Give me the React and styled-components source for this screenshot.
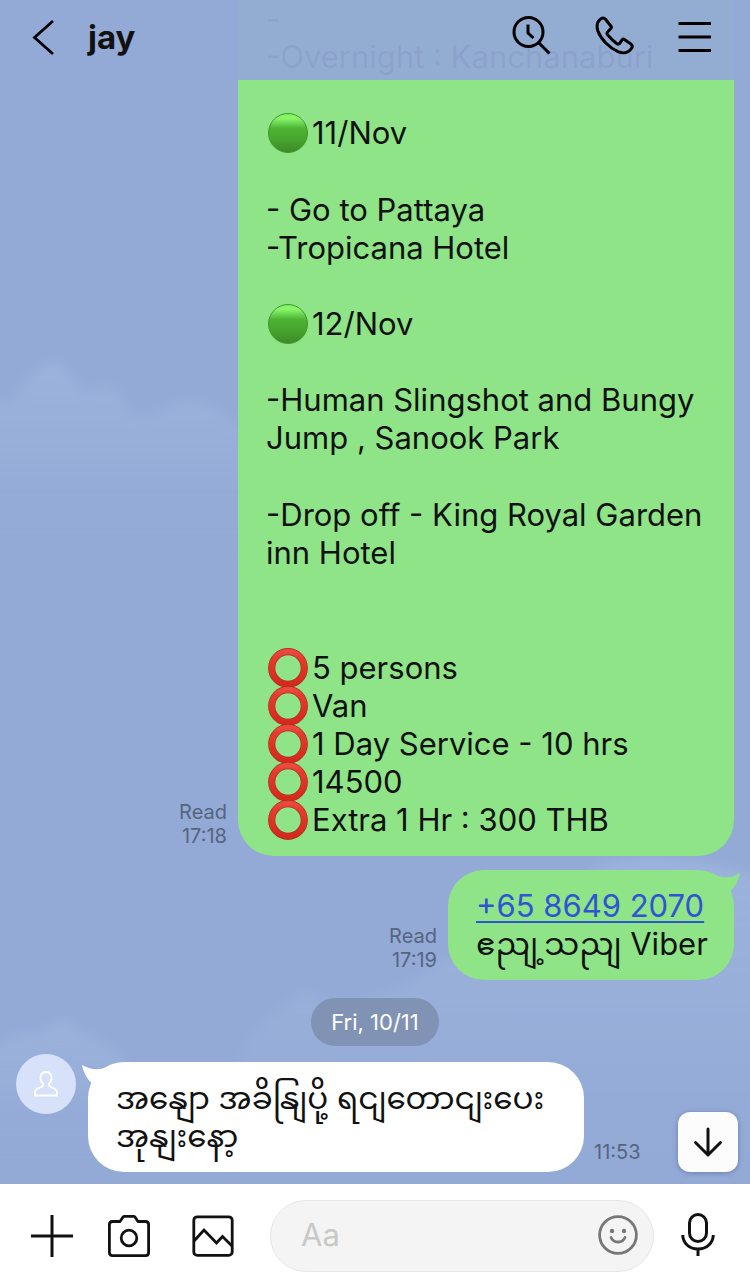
import React from "react";
import styled, { createGlobalStyle } from "styled-components";

const GlobalStyle = createGlobalStyle`
  * { box-sizing: border-box; }
  body {
    margin: 0;
    font-family: Inter, "Noto Sans Myanmar", "Noto Sans", sans-serif;
    color: #111;
    background: #93aad6;
  }
  p { margin: 0; }
  svg { display: block; }
`;

const Page = styled.div`
  display: flex;
  flex-direction: column;
  min-height: 100vh;
`;

const Header = styled.header`
  position: sticky;
  top: 0;
  z-index: 2;
  display: flex;
  align-items: center;
  height: 80px;
  margin-bottom: -80px;
  padding: 0 38px 6px 32px;
  background: rgba(147, 170, 214, 0.95);
`;

const Title = styled.h1`
  flex: 1;
  margin: 0 0 0 32px;
  font-size: 33px;
  line-height: 40px;
  font-weight: 700;
`;

const IconButton = styled.button`
  display: flex;
  align-items: center;
  justify-content: center;
  padding: 0;
  border: 0;
  background: none;
  color: ${(p) => p.$color || "#111"};
  cursor: pointer;
`;

const HeaderTools = styled.nav`
  display: flex;
  gap: 43px;
`;

const Chat = styled.main`
  position: relative;
  isolation: isolate;
  flex: 1;
  display: flex;
  flex-direction: column;
  padding: 0 16px 12px;
`;

const Sky = styled.svg`
  position: absolute;
  inset: 0;
  z-index: -1;
  width: 100%;
  height: 100%;
`;

const MessageRow = styled.div`
  display: flex;
  align-items: flex-end;
  justify-content: ${(p) => (p.$own ? "flex-end" : "flex-start")};
  gap: ${(p) => (p.$own ? "11px" : "10px")};
  margin-bottom: ${(p) => p.$after || 0}px;
`;

const Bubble = styled.div`
  position: relative;
  width: ${(p) => p.$width}px;
  max-width: calc(100% - 140px);
  padding: 17px 28px;
  border-radius: 36px;
  background: ${(p) => (p.$own ? "#8ee487" : "#fff")};
  font-size: 31px;
  line-height: 38px;
`;

const LongBubble = styled(Bubble)`
  padding: 0 28px 17px;
  border-radius: 0 0 36px 36px;
`;

const ShortLine = styled.p`
  height: 38px;
  white-space: nowrap;
`;

const Tail = styled.svg`
  position: absolute;
  top: 3px;
  ${(p) => (p.$own ? "right" : "left")}: -6px;
`;

const Paragraph = styled.div`
  margin-bottom: ${(p) => p.$after || 0}px;
`;

const MarkedLine = styled.p`
  display: flex;
  align-items: center;
  gap: 4px;
  height: 38px;
  padding-left: 2px;
  svg { flex: none; }
`;

const Meta = styled.div`
  padding-bottom: ${(p) => p.$bottom}px;
  font-size: 20px;
  line-height: 24px;
  color: #56647f;
  text-align: right;
  white-space: nowrap;
`;

const PhoneLink = styled.a`
  color: #2f55d4;
  text-decoration: underline;
  text-decoration-thickness: 2px;
  text-underline-offset: 4px;
`;

const DatePill = styled.time`
  align-self: center;
  margin-bottom: 16px;
  padding: 0 20px;
  border-radius: 24px;
  background: #8193b5;
  color: #fff;
  font-size: 22px;
  line-height: 48px;
`;

const Avatar = styled.div`
  display: flex;
  align-items: center;
  justify-content: center;
  align-self: flex-start;
  flex: none;
  width: 60px;
  height: 60px;
  margin: -8px 2px 0 0;
  border-radius: 50%;
  background: #d7e1fa;
`;

const ScrollButton = styled(IconButton)`
  position: absolute;
  right: 12px;
  bottom: 12px;
  width: 60px;
  height: 60px;
  border-radius: 12px;
  background: #fcfcfc;
  box-shadow: 0 1px 5px rgba(30, 50, 90, 0.35);
`;

const Composer = styled.form`
  display: grid;
  grid-template-columns: 72px 82px 86px minmax(0, 1fr) 88px;
  align-items: center;
  padding: 16px 8px 14px 16px;
  background: #fff;
`;

const Field = styled.label`
  display: flex;
  align-items: center;
  height: 72px;
  margin-left: 14px;
  padding: 0 15px 2px 30px;
  border: 1px solid #e6e6e6;
  border-radius: 36px;
  background: #f4f4f4;
`;

const TextInput = styled.input`
  flex: 1;
  min-width: 0;
  padding: 0;
  border: 0;
  outline: 0;
  background: none;
  font: 31px/38px Inter, sans-serif;
  color: #111;
  &::placeholder { color: #c8c8c8; opacity: 1; }
`;

const stroke = { fill: "none", stroke: "currentColor", strokeWidth: 3 };

const GreenDot = () => (
  <svg width="40" height="40" viewBox="0 0 40 40" aria-hidden="true">
    <defs>
      <linearGradient id="dot" x1="0" y1="0" x2="0" y2="1">
        <stop offset="0" stopColor="#7cf060" />
        <stop offset="0.12" stopColor="#8af76c" />
        <stop offset="0.38" stopColor="#4db333" />
        <stop offset="0.65" stopColor="#48a52e" />
        <stop offset="1" stopColor="#3d8928" />
      </linearGradient>
    </defs>
    <circle cx="20" cy="20" r="19.5" fill="url(#dot)" stroke="#429a2c" />
  </svg>
);

const RedRing = () => (
  <svg width="40" height="40" viewBox="0 0 40 40" aria-hidden="true">
    <defs>
      <linearGradient id="ring" x1="0" y1="0" x2="0" y2="1">
        <stop offset="0" stopColor="#ea4a3d" />
        <stop offset="0.2" stopColor="#e33b2d" />
        <stop offset="1" stopColor="#d42a1d" />
      </linearGradient>
    </defs>
    <circle cx="20" cy="20" r="16.3" fill="none" stroke="#b52a20" strokeWidth="7.2" />
    <circle cx="20" cy="20" r="16.3" fill="none" stroke="url(#ring)" strokeWidth="5.8" />
  </svg>
);

const Clouds = () => (
  <Sky viewBox="0 0 750 1184" preserveAspectRatio="none" aria-hidden="true">
    <defs>
      <filter id="soft" x="-20%" y="-20%" width="140%" height="140%">
        <feGaussianBlur stdDeviation="5" />
      </filter>
      <linearGradient id="cloud" x1="0" y1="0" x2="0" y2="1">
        <stop offset="0" stopColor="#9cb3dd" stopOpacity="0.9" />
        <stop offset="0.5" stopColor="#98afda" stopOpacity="0.8" />
        <stop offset="1" stopColor="#93aad6" stopOpacity="0" />
      </linearGradient>
    </defs>
    <g fill="url(#cloud)" filter="url(#soft)">
      <path d="M-20 405L15 400Q22 376 43 366Q62 356 72 376Q84 400 97 388Q120 382 126 408Q144 422 160 410Q188 394 215 408Q236 418 260 450V550H-20Z" />
      <path d="M-20 1060Q5 1030 42 1034Q64 1010 80 1032Q106 1040 125 1060V1150H-20Z" />
      <path d="M235 1080Q245 1030 280 1010Q305 980 330 1005Q400 1000 440 960Q560 930 590 870Q650 840 770 880V1190H235Z" />
    </g>
  </Sky>
);

export default function App() {
  return (
    <Page>
      <GlobalStyle />
      <Header>
        <IconButton aria-label="Back" $color="#000">
          <svg width="24" height="38" viewBox="0 0 24 38" {...stroke} strokeWidth="2.8">
            <path d="M21 3L2.5 19.5L21 36" />
          </svg>
        </IconButton>
        <Title>jay</Title>
        <HeaderTools>
          <IconButton aria-label="Search" $color="#000">
            <svg width="40" height="42" viewBox="0 0 40 42" {...stroke}>
              <circle cx="16.5" cy="16" r="14.5" />
              <path d="M16 8.5V17L21.5 22M27 27L37.5 37.5" />
            </svg>
          </IconButton>
          <IconButton aria-label="Call" $color="#000">
            <svg width="40" height="42" viewBox="0 0 40 42" {...stroke} strokeLinejoin="round">
              <path d="M6 2.8Q8.5 1 10.5 3.3L16.2 10.5Q16.7 11.5 15.8 12.5L12.8 15.7Q11.3 17.2 12.8 19Q17 24 22 27.8Q23.5 28.8 24.8 27.3L27.2 23.7Q28.2 22.7 29.4 23.5L36 28.1Q38.1 29.8 36.7 32.1C34 36.8 28.7 37.9 23 35.7C14.3 31.8 6 23.5 2.8 14.7C1.2 9.3 2.3 5.3 6 2.8Z" />
            </svg>
          </IconButton>
          <IconButton aria-label="Menu" $color="#000">
            <svg width="34" height="42" viewBox="0 0 34 42" {...stroke}>
              <path d="M0.5 7.5H33M0.5 21H33M0.5 34.5H33" />
            </svg>
          </IconButton>
        </HeaderTools>
      </Header>

      <Chat>
        <Clouds />
        <MessageRow $own $after={14}>
          <Meta $bottom={8}>Read<br />17:18</Meta>
          <LongBubble $own $width={496}>
            <Paragraph $after={38}>
              <p>-</p>
              <p>-Overnight : Kanchanaburi</p>
            </Paragraph>
            <Paragraph $after={39}>
              <MarkedLine><GreenDot />11/Nov</MarkedLine>
            </Paragraph>
            <Paragraph $after={38}>
              <p>- Go to Pattaya</p>
              <p>-Tropicana Hotel</p>
            </Paragraph>
            <Paragraph $after={38}>
              <MarkedLine><GreenDot />12/Nov</MarkedLine>
            </Paragraph>
            <Paragraph $after={39}>
              <p>-Human Slingshot and Bungy<br />Jump , Sanook Park</p>
            </Paragraph>
            <Paragraph $after={77}>
              <p>-Drop off - King Royal Garden<br />inn Hotel</p>
            </Paragraph>
            <Paragraph>
              <MarkedLine><RedRing />5 persons</MarkedLine>
              <MarkedLine><RedRing />Van</MarkedLine>
              <MarkedLine><RedRing />1 Day Service - 10 hrs</MarkedLine>
              <MarkedLine><RedRing />14500</MarkedLine>
              <MarkedLine><RedRing />Extra 1 Hr : 300 THB</MarkedLine>
            </Paragraph>
          </LongBubble>
        </MessageRow>

        <MessageRow $own $after={18}>
          <Meta $bottom={8}>Read<br />17:19</Meta>
          <Bubble $own $width={286}>
            <Tail $own width="24" height="24" viewBox="0 0 24 24" fill="#8ee487" aria-hidden="true">
              <path d="M0 2.5Q12 7 24 0Q22 11 14.5 18L12 20Z" />
            </Tail>
            <ShortLine><PhoneLink href="tel:+6586492070">+65 8649 2070</PhoneLink></ShortLine>
            <ShortLine>ဧညျ့သညျ Viber</ShortLine>
          </Bubble>
        </MessageRow>

        <DatePill>Fri, 10/11</DatePill>

        <MessageRow>
          <Avatar>
            <svg width="24" height="26" viewBox="0 0 24 26" fill="none" stroke="#fff" strokeWidth="1.9" strokeLinejoin="round" role="img" aria-label="Profile">
              <path d="M12 1C8 1 6 4 6.5 8Q7 11 9 12.7Q9.5 15 7 16L3 18Q1 19.2 1 21V24.5H23V21Q23 19.2 21 18L17 16Q14.5 15 15 12.7Q17 11 17.5 8C18 4 16 1 12 1Z" />
            </svg>
          </Avatar>
          <Bubble $width={496}>
            <Tail width="24" height="24" viewBox="0 0 24 24" fill="#fff" aria-hidden="true">
              <path d="M24 2.5Q12 7 0 0Q2 11 9.5 18L12 20Z" />
            </Tail>
            <ShortLine>အနျော အခိနျြပို့ ရငျတောငျးပေး</ShortLine>
            <ShortLine>အုနျးနော့</ShortLine>
          </Bubble>
          <Meta $bottom={8}>11:53</Meta>
        </MessageRow>

        <ScrollButton aria-label="Scroll to latest">
          <svg width="30" height="32" viewBox="0 0 30 32" {...stroke} strokeLinecap="round" strokeLinejoin="round">
            <path d="M15 3V29M2.5 16.5L15 29L27.5 16.5" />
          </svg>
        </ScrollButton>
      </Chat>

      <Composer onSubmit={(e) => e.preventDefault()}>
        <IconButton type="button" aria-label="Add">
          <svg width="42" height="42" viewBox="0 0 42 42" {...stroke}>
            <path d="M21 0V42M0 21H42" />
          </svg>
        </IconButton>
        <IconButton type="button" aria-label="Camera">
          <svg width="42" height="42" viewBox="0 0 42 42" {...stroke} strokeWidth="2.8" strokeLinejoin="round">
            <path d="M4.5 6.5H12L15.2 1.8Q15.5 1.4 16.5 1.4H25.5Q26.5 1.4 26.8 1.8L30 6.5H37.5Q40.6 6.5 40.6 9.7V37.5Q40.6 40.6 37.5 40.6H4.5Q1.4 40.6 1.4 37.5V9.7Q1.4 6.5 4.5 6.5Z" />
            <circle cx="21" cy="23" r="7.8" />
          </svg>
        </IconButton>
        <IconButton type="button" aria-label="Photos">
          <svg width="42" height="42" viewBox="0 0 42 42" {...stroke} strokeWidth="2.8">
            <rect x="1.8" y="1.8" width="38.4" height="38.6" rx="3.5" />
            <path d="M2 26L12 15L24.5 28L30.5 21.5L40 31" />
          </svg>
        </IconButton>
        <Field>
          <TextInput placeholder="Aa" aria-label="Message" />
          <IconButton type="button" aria-label="Stickers" $color="#777">
            <svg width="40" height="40" viewBox="0 0 40 40" {...stroke} strokeWidth="2.8">
              <circle cx="20" cy="20" r="18.4" />
              <path d="M13 22.5Q15 27 20 27T27 22.5" strokeLinecap="round" />
              <circle cx="14" cy="16" r="2.2" fill="currentColor" stroke="none" />
              <circle cx="26" cy="16" r="2.2" fill="currentColor" stroke="none" />
            </svg>
          </IconButton>
        </Field>
        <IconButton type="button" aria-label="Voice message">
          <svg width="34" height="46" viewBox="0 0 34 46" {...stroke}>
            <rect x="8.5" y="1.5" width="17" height="27" rx="8.5" />
            <path d="M1.7 22C2 30 8 36 17 36S32 30 32.3 22M17 36V43" />
          </svg>
        </IconButton>
      </Composer>
    </Page>
  );
}
